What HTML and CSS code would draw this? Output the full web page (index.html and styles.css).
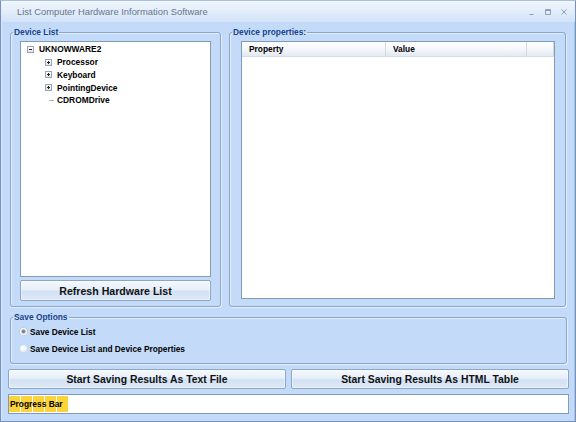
FILE: index.html
```html
<!DOCTYPE html>
<html>
<head>
<meta charset="utf-8">
<title>List Computer Hardware Information Software</title>
<link rel="stylesheet" href="styles.css">
</head>
<body>
<div class="window">
  <div class="titlebar">
    <span class="title">List Computer Hardware Information Software</span>
    <div class="controls">
      <svg class="ctl" width="8" height="8" viewBox="0 0 8 8"><path d="M1.5 6.5h4" /></svg>
      <svg class="ctl" width="8" height="8" viewBox="0 0 8 8"><path d="M1.5 1.5h5v5h-5z M1.5 2.5h5" /></svg>
      <svg class="ctl" width="8" height="8" viewBox="0 0 8 8"><path d="M1.5 1.5l5 5M6.5 1.5l-5 5" /></svg>
    </div>
  </div>
  <div class="client">
    <div class="top-row">
      <fieldset class="group list-group">
        <legend>Device List</legend>
        <div class="group-body">
          <div class="tree">
            <div class="node root"><span class="expander minus"></span>UKNOWWARE2</div>
            <div class="node child"><span class="expander plus"></span>Processor</div>
            <div class="node child"><span class="expander plus"></span>Keyboard</div>
            <div class="node child"><span class="expander plus"></span>PointingDevice</div>
            <div class="node child"><span class="leafline"></span>CDROMDrive</div>
          </div>
          <button class="btn refresh">Refresh Hardware List</button>
        </div>
      </fieldset>
      <fieldset class="group props-group">
        <legend>Device properties:</legend>
        <div class="group-body">
          <div class="listview">
            <div class="lv-header">
              <div class="col col-prop">Property</div>
              <div class="col col-val">Value</div>
              <div class="col col-rest"></div>
            </div>
          </div>
        </div>
      </fieldset>
    </div>
    <fieldset class="group save-group">
      <legend>Save Options</legend>
      <div class="group-body">
        <div class="radio-row"><span class="radio checked"></span>Save Device List</div>
        <div class="radio-row"><span class="radio"></span>Save Device List and Device Properties</div>
      </div>
    </fieldset>
    <div class="save-buttons">
      <button class="btn">Start Saving Results As Text File</button>
      <button class="btn">Start Saving Results As HTML Table</button>
    </div>
    <div class="progress">
      <span class="seg"></span><span class="seg"></span><span class="seg"></span><span class="seg"></span><span class="seg"></span>
      <span class="progress-label">Progress Bar</span>
    </div>
  </div>
</div>
</body>
</html>
```

FILE: styles.css
```css
* { box-sizing: border-box; }
html, body { margin: 0; padding: 0; }
body {
  width: 576px;
  height: 422px;
  overflow: hidden;
  font-family: "Liberation Sans", Arial, sans-serif;
  background: #c3daf9;
}
.window {
  width: 576px;
  height: 422px;
  display: flex;
  flex-direction: column;
  background: #c3daf9;
  border: 1px solid #7393bd;
  border-top-color: #a9c0de;
  box-shadow: inset 1px 0 0 #dbe8fb, inset -1px 0 0 #a9c2e3;
}
.titlebar {
  height: 21px;
  flex: none;
  display: flex;
  align-items: center;
  padding-left: 16px;
  background: linear-gradient(#f1f6fd, #e1ecfa 55%, #d2e2f7);
}
.title {
  flex: 1;
  font-size: 9.4px;
  color: #66768a;
}
.controls {
  display: flex;
  gap: 8px;
  padding-right: 7px;
  align-items: center;
}
.ctl path {
  fill: none;
  stroke: #8fa0b5;
  stroke-width: 1;
}
.client {
  flex: 1;
  display: flex;
  flex-direction: column;
  padding: 5px 6px 7px 7px;
}
.top-row {
  display: flex;
  gap: 8px;
  padding: 0 3px 0 2px;
}
.group {
  margin: 0;
  padding: 0;
  min-width: 0;
  border: 1px solid #87a5cf;
  border-radius: 3px;
  box-shadow: 1px 1px 0 #e4eefc, inset 1px 1px 0 #e4eefc;
}
.group legend {
  margin-left: 2px;
  padding: 0 1px;
  font-size: 8.4px;
  line-height: 10px;
  font-weight: bold;
  color: #15428b;
}
.list-group { width: 211px; flex: none; }
.props-group { flex: 1; }
.group-body {
  display: flex;
  flex-direction: column;
}
.list-group .group-body { padding: 4px 9px 5px; }
.props-group .group-body { padding: 4px 10px 7px 11px; }

.tree {
  height: 236px;
  background: #fff;
  border: 1px solid #7f9db9;
  padding-top: 1px;
}
.node {
  height: 12.75px;
  display: flex;
  align-items: center;
  font-size: 8.4px;
  font-weight: bold;
  color: #000;
}
.root { padding-left: 6px; }
.child { padding-left: 24px; }
.expander {
  width: 7px;
  height: 7px;
  margin-right: 5px;
  border: 1px solid #97a5b6;
  flex: none;
}
.minus {
  background:
    linear-gradient(#222, #222) center / 3px 1px no-repeat,
    linear-gradient(#ffffff, #dfe4ec);
}
.plus {
  background:
    linear-gradient(#222, #222) center / 3px 1px no-repeat,
    linear-gradient(#222, #222) center / 1px 3px no-repeat,
    linear-gradient(#ffffff, #dfe4ec);
}
.leafline {
  width: 5px;
  height: 1px;
  margin-left: 4px;
  margin-right: 3px;
  background: #a4acb8;
  flex: none;
}

.btn {
  font-family: inherit;
  font-weight: bold;
  color: #111;
  border: 1px solid #8ca6c9;
  border-radius: 2px;
  padding: 0;
  margin: 0;
  background: linear-gradient(#f6f9fe 0%, #e6eef9 45%, #d2e1f4 55%, #dce8f7 100%);
  box-shadow: inset 0 0 0 1px rgba(255,255,255,0.5);
}
.refresh {
  height: 21px;
  margin-top: 3px;
  font-size: 10.6px;
}

.listview {
  height: 258px;
  background: #fff;
  border: 1px solid #7f9db9;
}
.lv-header {
  display: flex;
  height: 15px;
  background: linear-gradient(#ffffff, #f3f6fa 55%, #e3e9f1);
  border-bottom: 1px solid #d3dbe6;
}
.col {
  font-size: 8.4px;
  font-weight: bold;
  line-height: 14px;
  padding-left: 7px;
  border-right: 1px solid #d2d9e3;
  color: #000;
}
.col-prop { width: 144px; }
.col-val { width: 141px; }
.col-rest { width: 27px; }

.save-group {
  margin: 5px 2px 0;
}
.save-group .group-body { padding: 1px 9px 6px; }
.radio-row {
  height: 17px;
  display: flex;
  align-items: center;
  font-size: 8.3px;
  font-weight: bold;
  color: #000;
}
.radio {
  width: 7px;
  height: 7px;
  border-radius: 50%;
  margin-right: 3px;
  flex: none;
  background: radial-gradient(circle at 40% 40%, #ffffff, #dfe6ef);
  box-shadow: 0 0 0 0.5px #d0d8e4;
}
.radio.checked {
  background: radial-gradient(circle, #6d7784 0, #8c96a3 1.6px, #e8edf3 2.4px, #ffffff 3.5px);
  box-shadow: 0 0 0 0.5px #b8c2cf;
}

.save-buttons {
  display: flex;
  gap: 5px;
  margin-top: 5px;
}
.save-buttons .btn {
  flex: 1;
  height: 20px;
  font-size: 10.4px;
}

.progress {
  margin-top: 5px;
  height: 20px;
  background: #fff;
  border: 1px solid #7f9db9;
  display: flex;
  gap: 1px;
  padding: 1px 0 1px 0;
  position: relative;
}
.seg {
  width: 11px;
  background: #fcd339;
}
.progress-label {
  position: absolute;
  left: 1px;
  top: 0;
  line-height: 18px;
  font-size: 8.4px;
  font-weight: bold;
  color: #000;
}
```
